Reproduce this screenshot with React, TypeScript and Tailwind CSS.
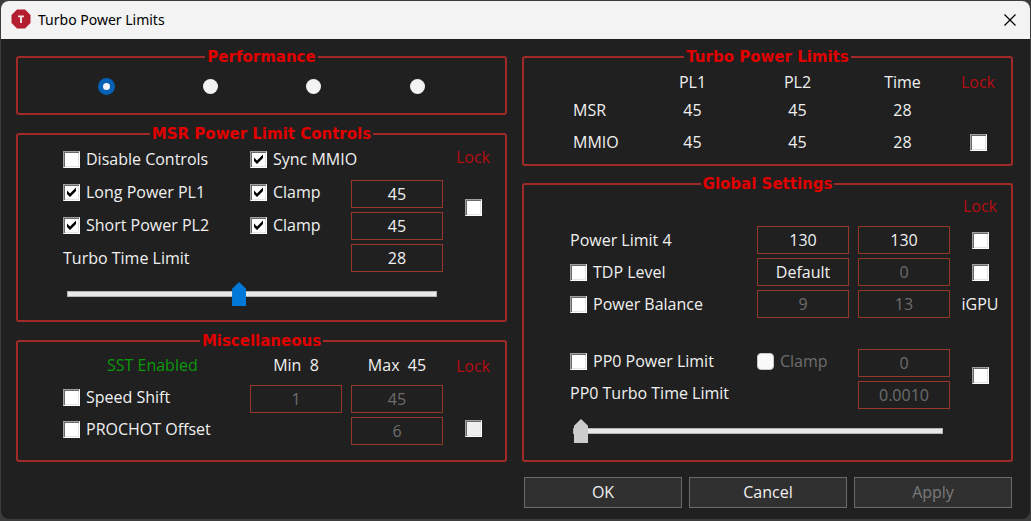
import { useState, type ReactNode } from "react";
import clsx from "clsx";

function Group({ title, children }: { title: string; children: ReactNode }) {
  return (
    <fieldset className="min-w-0 rounded-[3px] border-2 border-[#a02a28]">
      <legend className="mx-auto px-0.5 font-['DejaVu_Sans',sans-serif] text-[15px] leading-4 font-bold text-[#e00000]">
        {title}
      </legend>
      {children}
    </fieldset>
  );
}

type CheckProps = {
  label: string;
  hideLabel?: boolean;
  checked?: boolean;
  disabled?: boolean;
  soft?: boolean;
};

function Check({ label, hideLabel, checked = false, disabled, soft }: CheckProps) {
  const [on, setOn] = useState(checked);
  return (
    <label className={clsx("flex items-center gap-1.5 leading-5 whitespace-nowrap", soft && "text-[#6d6d6d]")}>
      <span className="grid shrink-0">
        <input
          type="checkbox"
          aria-label={label}
          checked={on}
          disabled={disabled}
          onChange={(e) => setOn(e.target.checked)}
          className={clsx(
            "peer col-start-1 row-start-1 size-[17px] appearance-none",
            soft
              ? "rounded border border-[#c8c8c8] bg-[#f9f9f9]"
              : "border border-t-[#a0a0a0] border-r-white border-b-white border-l-[#a0a0a0] shadow-[inset_1px_1px_0_#696969,inset_-1px_-1px_0_#e3e3e3]",
            !soft && (disabled ? "bg-[#f0f0f0]" : "bg-white"),
          )}
        />
        <svg
          viewBox="0 0 17 17"
          className="pointer-events-none invisible col-start-1 row-start-1 size-[17px] peer-checked:visible"
          aria-hidden="true"
        >
          <path d="M4 6.5 L7 9.5 L13 3.5 V7 L7 13 L4 10 Z" fill="#000" />
        </svg>
      </span>
      {!hideLabel && <span>{label}</span>}
    </label>
  );
}

function Field({ label, value, disabled }: { label: string; value: string; disabled?: boolean }) {
  return (
    <input
      type="text"
      aria-label={label}
      defaultValue={value}
      disabled={disabled}
      className="h-7 w-full min-w-0 border border-[#93382a] bg-transparent text-center text-[#f0f0f0] disabled:text-[#6d6d6d]"
    />
  );
}

function Slider({ label, value, disabled }: { label: string; value: number; disabled?: boolean }) {
  return (
    <input
      type="range"
      aria-label={label}
      min={0}
      max={356}
      defaultValue={value}
      disabled={disabled}
      className="block h-6 w-full appearance-none bg-transparent [&::-webkit-slider-runnable-track]:h-1.5 [&::-webkit-slider-runnable-track]:border [&::-webkit-slider-runnable-track]:border-[#b4b6b5] [&::-webkit-slider-runnable-track]:bg-[#e6e9e7] [&::-webkit-slider-thumb]:-mt-2.5 [&::-webkit-slider-thumb]:h-6 [&::-webkit-slider-thumb]:w-3.5 [&::-webkit-slider-thumb]:appearance-none [&::-webkit-slider-thumb]:bg-[#0078d7] [&::-webkit-slider-thumb]:[clip-path:polygon(50%_0,100%_28%,100%_100%,0_100%,0_28%)] disabled:[&::-webkit-slider-thumb]:bg-[#cccccc]"
    />
  );
}

function Lock() {
  return <span className="leading-7 text-[#b80c12]">Lock</span>;
}

function Performance() {
  const [profile, setProfile] = useState(1);
  return (
    <Group title="Performance">
      <div className="mb-1.5 grid h-[42px] grid-cols-4 items-center justify-items-center pr-9 pl-[37px]">
        {[1, 2, 3, 4].map((n) => (
          <input
            key={n}
            type="radio"
            name="profile"
            aria-label={`Profile ${n}`}
            checked={profile === n}
            onChange={() => setProfile(n)}
            className="size-[15px] appearance-none rounded-full bg-[#f3f3f3] checked:size-[17px] checked:border-5 checked:border-[#0560b6]"
          />
        ))}
      </div>
    </Group>
  );
}

const columns = "grid grid-cols-[minmax(0,187fr)_minmax(0,101fr)_minmax(0,92fr)_minmax(0,60fr)]";
const stack = "flex flex-col gap-1";
const looseStack = "flex flex-col gap-[5px]";
const row = "flex h-7 items-center";

function MsrControls() {
  return (
    <Group title="MSR Power Limit Controls">
      <div className={clsx(columns, "pr-0.5 pl-[45px]")}>
        <div className={clsx(looseStack, "pt-[3px]")}>
          <div className={row}><Check label="Disable Controls" /></div>
          <div className={row}><Check label="Long Power PL1" checked /></div>
          <div className={row}><Check label="Short Power PL2" checked /></div>
          <div className={row}>Turbo Time Limit</div>
        </div>
        <div className={clsx(looseStack, "pt-[3px]")}>
          <div className={row}><Check label="Sync MMIO" checked /></div>
          <div className={row}><Check label="Clamp" checked /></div>
          <div className={row}><Check label="Clamp" checked /></div>
        </div>
        <div className={clsx(stack, "pt-[38px]")}>
          <Field label="Long power limit" value="45" />
          <Field label="Short power limit" value="45" />
          <Field label="Turbo time" value="28" />
        </div>
        <div className="flex flex-col items-center gap-7 pt-px">
          <Lock />
          <Check label="Lock MSR" hideLabel />
        </div>
      </div>
      <div className="mt-2.5 mb-3.5 pr-[68px] pl-[49px]">
        <Slider label="Turbo time limit" value={165} />
      </div>
    </Group>
  );
}

function Miscellaneous() {
  return (
    <Group title="Miscellaneous">
      <div className={clsx(columns, "pr-0.5 pb-[15px] pl-[45px]")}>
        <div className={clsx(stack, "pt-0.5")}>
          <div className={clsx(row, "pl-11 text-[#0a9a0a]")}>SST Enabled</div>
          <div className={row}><Check label="Speed Shift" /></div>
          <div className={row}><Check label="PROCHOT Offset" /></div>
        </div>
        <div className={clsx(stack, "pt-0.5 pr-[9px]")}>
          <div className={clsx(row, "justify-center whitespace-pre")}>{"Min  8"}</div>
          <div className="pt-0.5"><Field label="Speed shift minimum" value="1" disabled /></div>
        </div>
        <div className={clsx(stack, "pt-0.5")}>
          <div className={clsx(row, "justify-center whitespace-pre")}>{"Max  45"}</div>
          <div className={clsx(stack, "pt-0.5")}>
            <Field label="Speed shift maximum" value="45" disabled />
            <Field label="PROCHOT offset value" value="6" disabled />
          </div>
        </div>
        <div className="flex flex-col items-center justify-between pt-[3px] pb-2">
          <Lock />
          <Check label="Lock PROCHOT" hideLabel disabled />
        </div>
      </div>
    </Group>
  );
}

function TurboLimits() {
  return (
    <Group title="Turbo Power Limits">
      <div className="pt-[3px] pr-2.5 pb-1 pl-[49px]">
        <table className="w-full table-fixed text-center">
          <thead>
            <tr className="h-7">
              <td />
              <th scope="col" className="w-[105px] font-normal">PL1</th>
              <th scope="col" className="w-[105px] font-normal">PL2</th>
              <th scope="col" className="w-[105px] font-normal">Time</th>
              <th scope="col" className="w-[46px] font-normal text-[#b80c12]">Lock</th>
            </tr>
          </thead>
          <tbody>
            <tr className="h-7">
              <th scope="row" className="text-left font-normal">MSR</th>
              <td>45</td>
              <td>45</td>
              <td>28</td>
              <td />
            </tr>
            <tr className="h-9">
              <th scope="row" className="text-left font-normal">MMIO</th>
              <td>45</td>
              <td>45</td>
              <td>28</td>
              <td><div className="flex justify-center"><Check label="Lock MMIO" hideLabel /></div></td>
            </tr>
          </tbody>
        </table>
      </div>
    </Group>
  );
}

function GlobalSettings() {
  const center = "flex justify-center";
  return (
    <Group title="Global Settings">
      <div className="pr-px pl-[46px]">
        <div className={clsx(columns, "items-center gap-y-1")}>
          <div className={clsx(center, "col-start-4 pb-0.5")}><Lock /></div>

          <div>Power Limit 4</div>
          <div className="pr-[9px]"><Field label="Power limit 4, first" value="130" /></div>
          <Field label="Power limit 4, second" value="130" />
          <div className={center}><Check label="Lock power limit 4" hideLabel /></div>

          <Check label="TDP Level" />
          <div className="pr-[9px]"><Field label="TDP level" value="Default" /></div>
          <Field label="TDP level value" value="0" disabled />
          <div className={center}><Check label="Lock TDP level" hideLabel /></div>

          <Check label="Power Balance" />
          <div className="pr-[9px]"><Field label="CPU power balance" value="9" disabled /></div>
          <Field label="iGPU power balance" value="13" disabled />
          <div className={center}>iGPU</div>
        </div>
        <div className={clsx(columns, "items-center gap-y-1 pt-[31px]")}>
          <div className="pb-1"><Check label="PP0 Power Limit" /></div>
          <div className="pb-1"><Check label="Clamp" disabled soft /></div>
          <Field label="PP0 power limit value" value="0" disabled />
          <div className={clsx(center, "row-span-2 pb-2")}><Check label="Lock PP0" hideLabel /></div>

          <div className="col-span-2 pb-1">PP0 Turbo Time Limit</div>
          <Field label="PP0 turbo time" value="0.0010" disabled />
        </div>
        <div className="mt-2.5 mb-[17px] pr-[67px] pl-[3px]">
          <Slider label="PP0 turbo time limit" value={0} disabled />
        </div>
      </div>
    </Group>
  );
}

function DialogButton({ children, disabled }: { children: string; disabled?: boolean }) {
  return (
    <button
      type="button"
      disabled={disabled}
      className="h-[31px] w-[158px] border border-[#6a6a6a] bg-[#303030] pb-0.5 disabled:text-[#7a7a7a]"
    >
      {children}
    </button>
  );
}

export default function App() {
  return (
    <div className="flex min-h-screen flex-col bg-[#3c3c3c] px-px pt-px pb-0.5">
      <main className="flex grow flex-col overflow-hidden rounded-lg bg-[#202020] font-['Open_Sans',sans-serif] text-base leading-5 text-[#f0f0f0]">
        <header className="flex h-[38px] items-center justify-between bg-[#f3f3f3] pr-3 pl-2.5 text-black">
          <div className="flex items-center gap-[7px]">
            <svg viewBox="0 0 20 20" className="mb-0.5 size-5" aria-hidden="true">
              <path d="M6 0.5H14L19.5 6V14L14 19.5H6L0.5 14V6Z" fill="#b31f31" />
              <path d="M7 6.5H13V8.3H11V14H9V8.3H7Z" fill="#f6dfe2" />
            </svg>
            <h1 className="font-['Noto_Sans',sans-serif] text-sm">Turbo Power Limits</h1>
          </div>
          <button type="button" aria-label="Close" className="grid size-4 place-items-center">
            <svg viewBox="0 0 12 12" className="size-3" aria-hidden="true">
              <path d="M0.5 0.5L11.5 11.5M11.5 0.5L0.5 11.5" stroke="#000" strokeWidth="1.2" />
            </svg>
          </button>
        </header>
        <div className="grid grid-cols-2 gap-[15px] pt-2.5 pr-[17px] pl-[15px]">
          <div className="flex flex-col gap-[11px]">
            <Performance />
            <MsrControls />
            <Miscellaneous />
          </div>
          <div className="flex flex-col gap-2.5">
            <TurboLimits />
            <GlobalSettings />
          </div>
        </div>
        <footer className="flex justify-end gap-[7px] pt-[15px] pr-[18px] pb-2.5">
          <DialogButton>OK</DialogButton>
          <DialogButton>Cancel</DialogButton>
          <DialogButton disabled>Apply</DialogButton>
        </footer>
      </main>
    </div>
  );
}
